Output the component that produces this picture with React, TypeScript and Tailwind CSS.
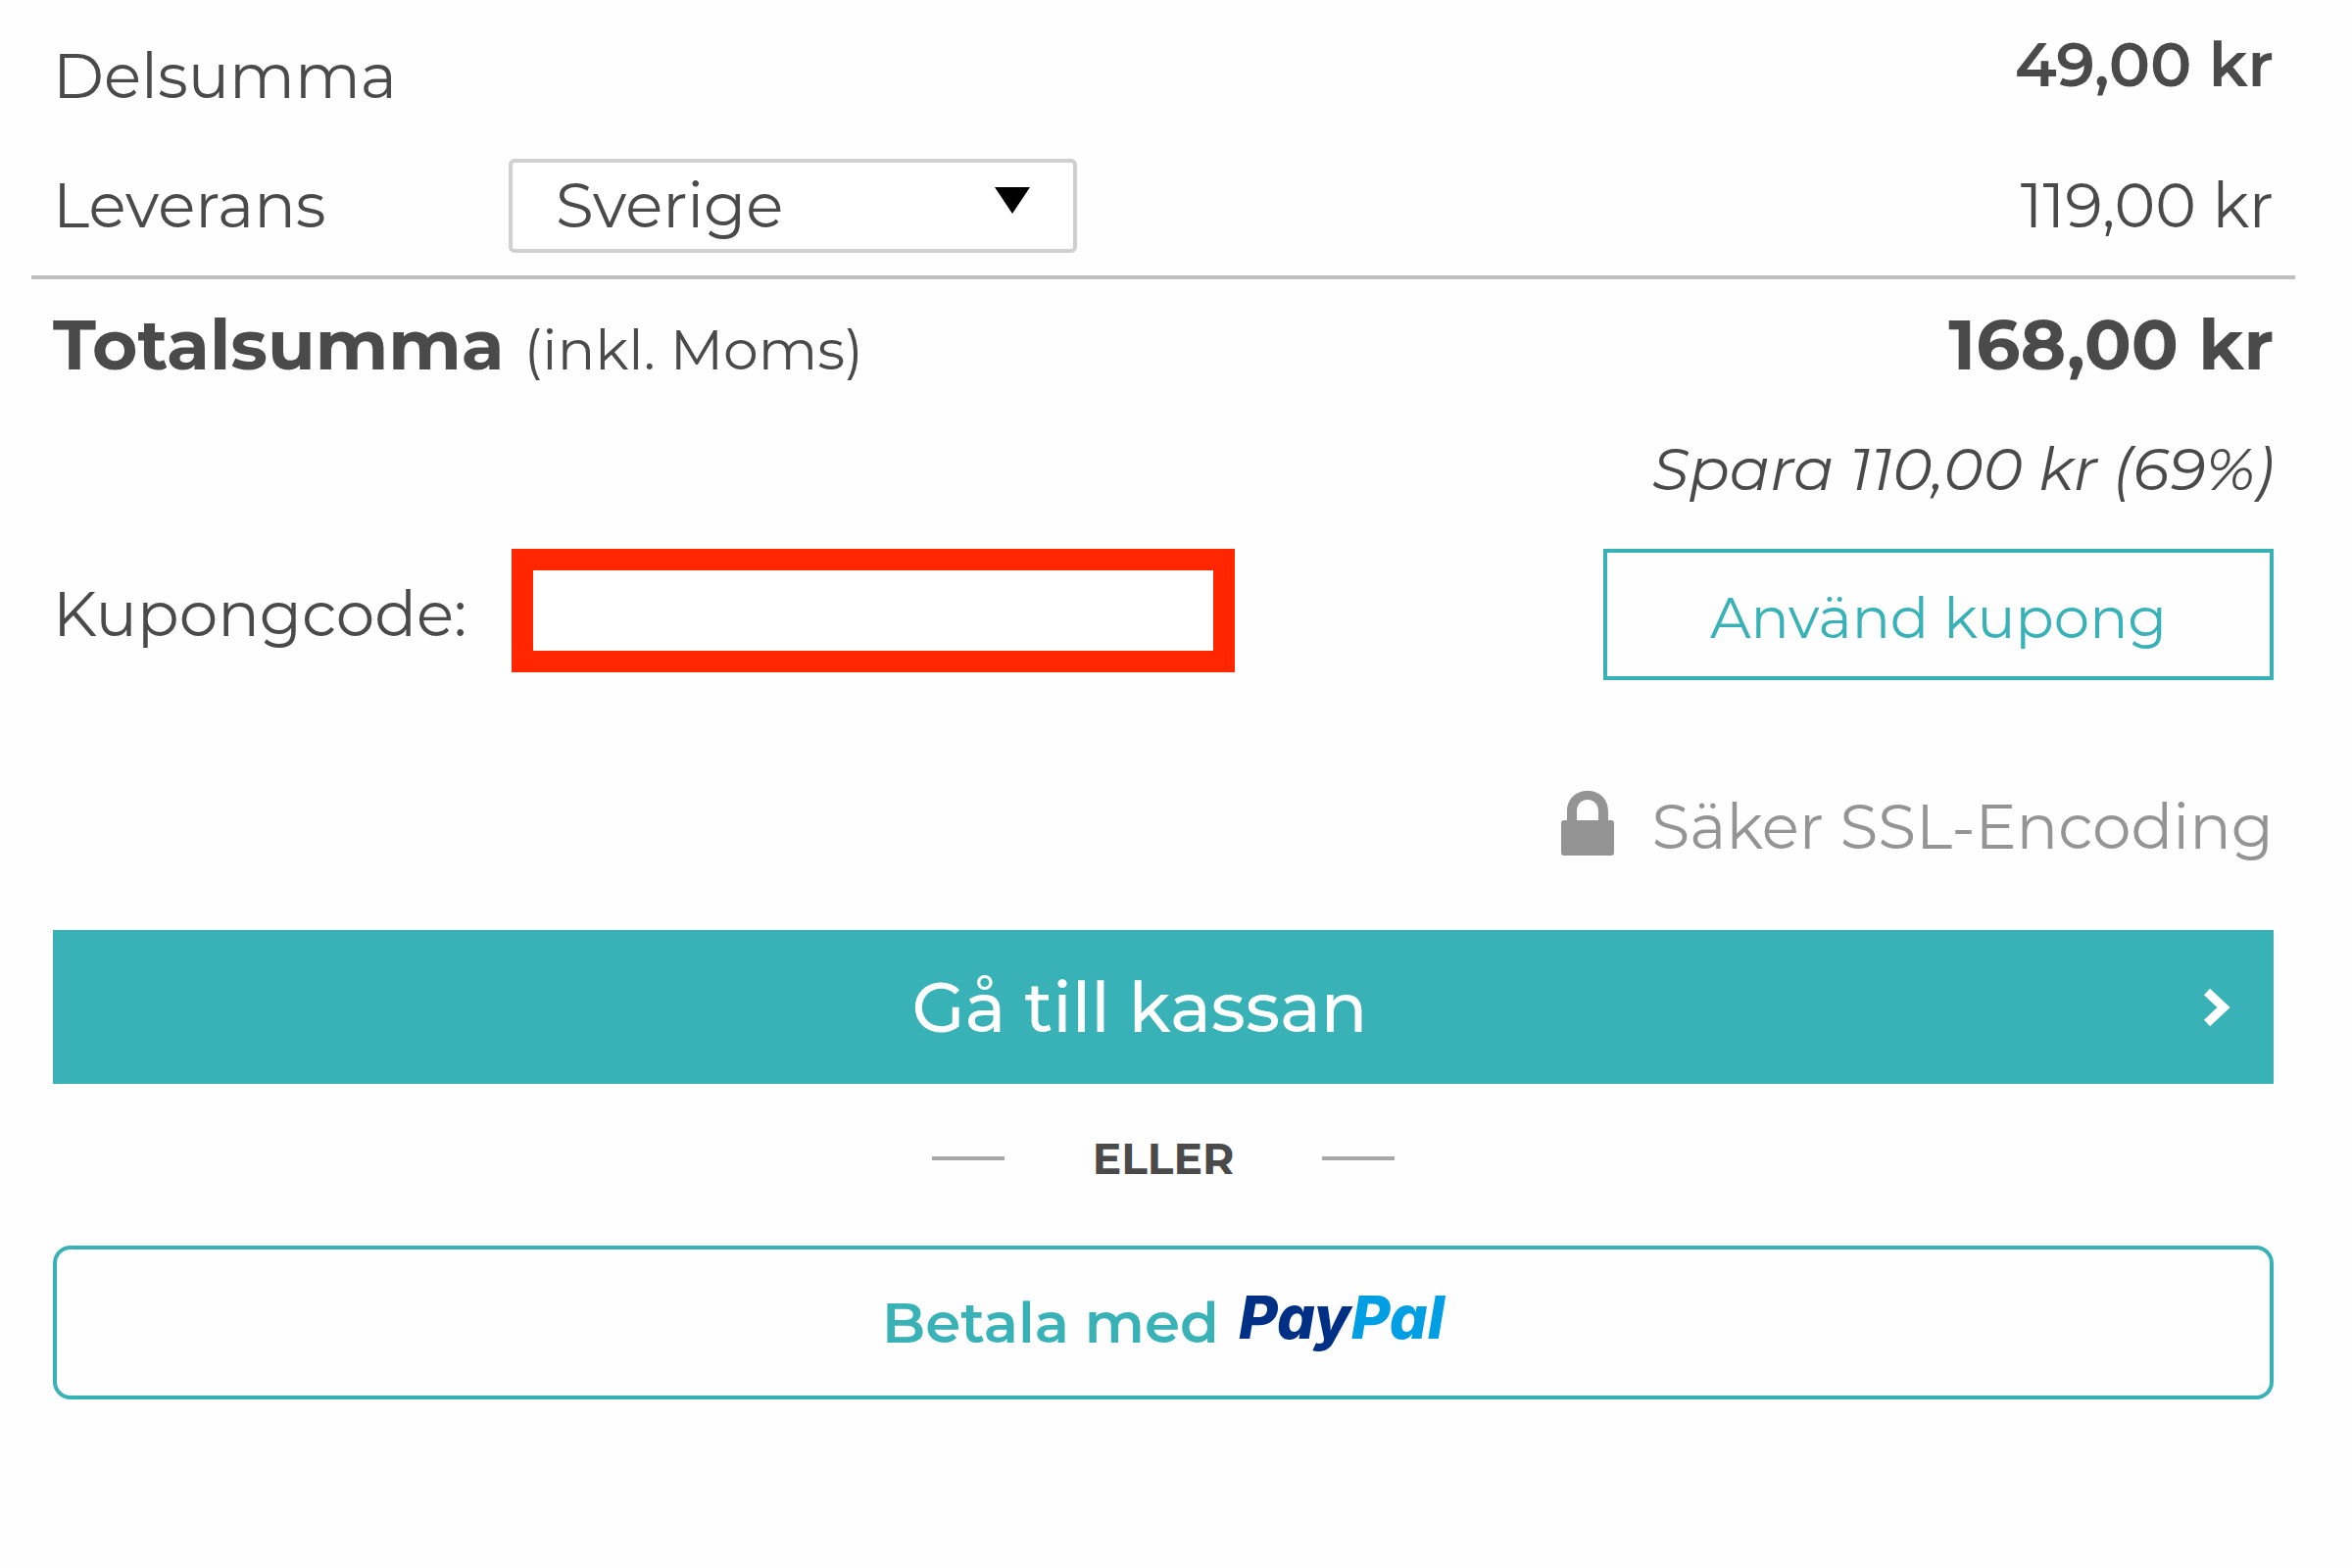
import { useState } from 'react';

const COUNTRIES = ['Sverige', 'Norge', 'Danmark', 'Finland'];

function LockIcon() {
  return (
    <svg className="w-14 h-17 shrink-0" viewBox="0 0 56 68" fill="currentColor" aria-hidden="true">
      <path
        fillRule="evenodd"
        d="M7 31V22C7 9 16 1 28 1s21 8 21 21v9h3q3 0 3 3v30q0 3-3 3H4q-3 0-3-3V34q0-3 3-3zm10 0h22V22c0-7-4-12-11-12s-11 5-11 12z"
      />
    </svg>
  );
}

function ChevronIcon() {
  return (
    <svg className="w-7 h-10 shrink-0" viewBox="0 0 28 40" fill="none" stroke="currentColor" aria-hidden="true">
      <path strokeWidth={9} d="M4 4l17 16L4 36" />
    </svg>
  );
}

export default function App() {
  const [country, setCountry] = useState('Sverige');
  const [coupon, setCoupon] = useState('');

  return (
    <main className="min-h-screen bg-[#fefefe] px-8 pr-[58px] pt-7 font-['Montserrat','Inter',sans-serif] text-[63px] leading-[76px] text-[#4a4a4a]">
      {/* Totals */}
      <section className="px-[22px]">
        <div className="flex items-start justify-between">
          <span className="pt-3">Delsumma</span>
          <span className="font-semibold">49,00 kr</span>
        </div>

        <div className="mt-[46px] flex items-center">
          <label htmlFor="country" className="w-[465px]">Leverans</label>
          <div className="relative">
            <select
              id="country"
              value={country}
              onChange={(e) => setCountry(e.target.value)}
              className="block w-[580px] h-24 appearance-none rounded-md border-4 border-[#d0d0d0] bg-white pl-11"
            >
              {COUNTRIES.map((name) => (
                <option key={name}>{name}</option>
              ))}
            </select>
            <svg className="pointer-events-none absolute right-12 top-7 w-9 h-7" viewBox="0 0 36 28" aria-hidden="true">
              <path d="M0 1h36L18 28z" fill="#000" />
            </svg>
          </div>
          <span className="ml-auto">119,00 kr</span>
        </div>
      </section>

      <hr className="mt-[23px] border-t-4 border-[#bfbfbf]" />

      <section className="px-[22px]">
        <div className="mt-[23px] flex items-baseline justify-between text-[71px] leading-[88px] font-bold">
          <span>
            Totalsumma <span className="text-[57px] leading-none font-normal">(inkl. Moms)</span>
          </span>
          <span>168,00 kr</span>
        </div>
        <p className="mt-11 text-right text-[61px] italic">Spara 110,00 kr (69%)</p>

        {/* Coupon */}
        <form className="mt-11 flex items-start" onSubmit={(e) => e.preventDefault()}>
          <label htmlFor="coupon" className="w-[468px] leading-[134px]">Kupongcode:</label>
          <input
            id="coupon"
            type="text"
            value={coupon}
            onChange={(e) => setCoupon(e.target.value)}
            className="w-[738px] h-[126px] border-[22px] border-[#ff2600] bg-white px-4 outline-none"
          />
          <button
            type="submit"
            className="ml-auto w-[684px] h-[134px] border-4 border-[#38b1b7] pt-2 text-[58px] text-[#38b1b7]"
          >
            Använd kupong
          </button>
        </form>

        <p className="mt-28 flex items-start justify-end gap-[38px] text-[#949494]">
          <LockIcon />
          Säker SSL-Encoding
        </p>

        {/* Payment */}
        <button
          type="button"
          className="mt-[67px] flex h-[157px] w-full items-center bg-[#38b1b7] pl-6 pr-11 text-[70px] font-medium text-white"
        >
          <span className="flex-1">Gå till kassan</span>
          <ChevronIcon />
        </button>

        <div className="mt-[38px] flex items-center justify-center gap-[90px] text-[44px] font-bold">
          <span className="w-[74px] border-t-4 border-[#a8a8a8]" />
          ELLER
          <span className="w-[74px] border-t-4 border-[#a8a8a8]" />
        </div>

        <button
          type="button"
          className="mt-[51px] flex h-[157px] w-full items-center justify-center gap-5 rounded-[18px] border-4 border-[#38b1b7] text-[58px] font-semibold text-[#38b1b7]"
        >
          Betala med
          <span className="pb-3 font-['Inter',sans-serif] text-[61px] font-extrabold italic text-[#002f86] [font-feature-settings:'cv11']">
            Pay<span className="text-[#009ee3]">Pal</span>
          </span>
        </button>
      </section>
    </main>
  );
}
